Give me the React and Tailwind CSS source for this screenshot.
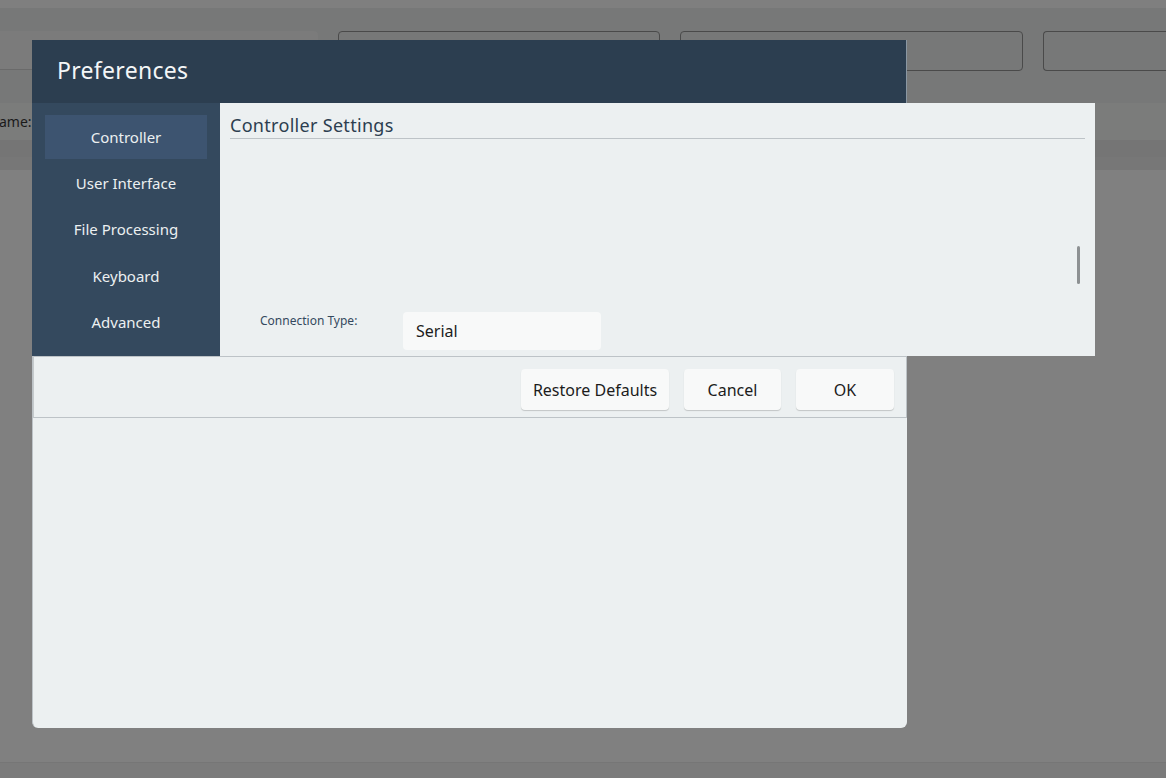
import React from "react";

const navItems = ["Controller", "User Interface", "File Processing", "Keyboard", "Advanced"];

export default function App() {
  return (
    <div className="relative w-[1166px] h-[778px] overflow-hidden bg-[#808080] font-['Noto_Sans',sans-serif]">
      {/* Dimmed app behind the dialog */}
      <div className="flex flex-col h-full">
        <div className="h-[8px] bg-[#7f7f7f]" />
        <div className="h-[95px] bg-[#777878] flex items-start pt-[23px] gap-[20px]">
          <div className="w-[318px] h-[39px] bg-[#7b7b7b] rounded-r-[4px] border-b border-[#6a6a6a]" />
          <div className="w-[322px] h-[40px] border border-[#4a4a4a] rounded-[4px]" />
          <div className="w-[343px] h-[40px] border border-[#4a4a4a] rounded-[4px]" />
          <div className="flex-1 h-[40px] border border-[#4a4a4a] rounded-l-[4px] border-r-0" />
        </div>
        <div className="h-[37px] bg-[#7b7c7b] flex items-center">
          <span className="text-[14px] text-[#1a1a1a] -ml-[1px]">ame:</span>
        </div>
        <div className="h-[17px] bg-[#757575]" />
        <div className="h-[13px] bg-[#777777]" />
        <div className="flex-1 bg-[#808080]" />
        <div className="h-[16px] bg-[#7b7b7b] border-t border-[#767676]" />
      </div>

      {/* Preferences dialog */}
      <div className="absolute left-[32px] top-[40px] w-[875px] h-[688px] flex flex-col">
        <div className="h-[63px] bg-[#2c3e50] flex items-center pl-[25px] border-r border-[#8a97a3]">
          <span className="text-[23px] text-[#f4f6f7] tracking-[0.3px] -mt-[2px]">Preferences</span>
        </div>
        <div className="flex h-[253px]">
          <div className="w-[188px] shrink-0 bg-[#34495e] flex flex-col pt-[12px] px-[13px]">
            {navItems.map((item, i) => (
              <div
                key={item}
                className={
                  "h-[44px] mb-[2.25px] flex items-center justify-center text-[15px] text-[#ecf0f1] " +
                  (i === 0 ? "bg-[#3d5470]" : "")
                }
              >
                {item}
              </div>
            ))}
          </div>
          <div className="w-[875px] shrink-0 bg-[#ecf0f1] flex flex-col pl-[10px] pr-[10px] pt-[10px]">
            <div className="text-[18px] text-[#2c3e50] tracking-[0.3px] leading-[24px] pb-[1px] border-b border-[#bdc3c7]">
              Controller Settings
            </div>
            <div className="h-[107px] flex justify-end">
              <div className="w-[3px] h-[38px] mt-[107px] mr-[5px] bg-[#8d9193] rounded-full" />
            </div>
            <div className="flex items-start pl-[30px] mt-[66px]">
              <span className="w-[143px] text-[12px] text-[#34495e]">Connection Type:</span>
              <div className="w-[198px] h-[38px] bg-[#f8f9f9] rounded-[4px] flex items-center pl-[13px] text-[16px] text-[#1c1c1c]">
                Serial
              </div>
            </div>
          </div>
        </div>
        <div className="flex-1 bg-[#ecf0f1] border-l border-[#bdc3c7] rounded-b-[6px] flex flex-col">
          <div className="h-[62px] border border-[#bdc3c7] border-l-[#c5cacc] flex items-start justify-end pt-[12px] pr-[12px] gap-[15px]">
            <button className="w-[148px] h-[41px] bg-[#f8f9f9] rounded-[4px] shadow-[0_1px_1px_rgba(0,0,0,0.18)] text-[16px] text-[#1c1c1c]">
              Restore Defaults
            </button>
            <button className="w-[97px] h-[41px] bg-[#f8f9f9] rounded-[4px] shadow-[0_1px_1px_rgba(0,0,0,0.18)] text-[16px] text-[#1c1c1c]">
              Cancel
            </button>
            <button className="w-[98px] h-[41px] bg-[#f8f9f9] rounded-[4px] shadow-[0_1px_1px_rgba(0,0,0,0.18)] text-[16px] text-[#1c1c1c]">
              OK
            </button>
          </div>
        </div>
      </div>
    </div>
  );
}
